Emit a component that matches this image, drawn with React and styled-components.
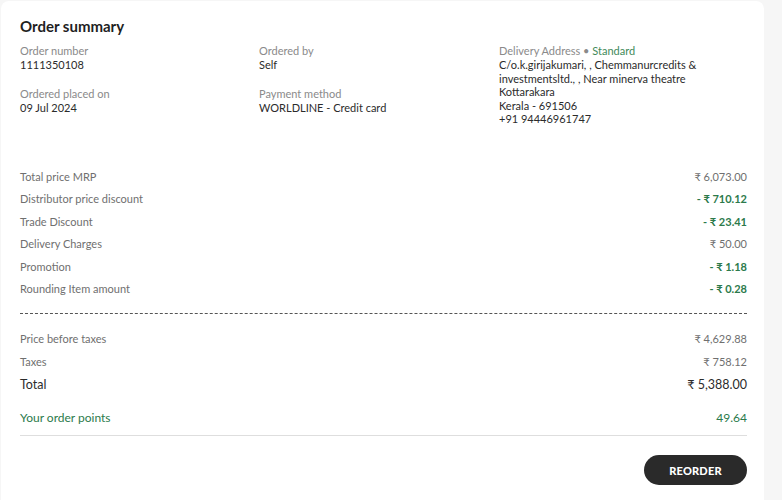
import React from "react";
import styled, { createGlobalStyle } from "styled-components";

const Global = createGlobalStyle`
  html, body { margin: 0; padding: 0; background: #f6f6f6; }
  body { font-family: Lato, "Noto Sans", sans-serif; color: #2b2b2b; }
  * { box-sizing: border-box; }
`;

const Page = styled.div`
  padding: 1px 0 0 1px;
  width: 782px;
  height: 500px;
  overflow: hidden;
`;

const Card = styled.section`
  width: 763px;
  min-height: 520px;
  background: #fff;
  border-radius: 8px;
  padding: 16px 17px 0 19px;
  display: flex;
  flex-direction: column;
`;

const Title = styled.h2`
  margin: 0;
  font-size: 15px;
  line-height: 18px;
  font-weight: 700;
  color: #1f1f1f;
`;

const InfoGrid = styled.div`
  display: grid;
  grid-template-columns: 239px 240px 1fr;
  margin-top: 9px;
`;

const Column = styled.div`
  display: flex;
  flex-direction: column;
  gap: 15px;
`;

const Field = styled.div`
  display: flex;
  flex-direction: column;
  font-size: 11px;
  line-height: 14px;
`;

const Label = styled.span`
  color: #8a8a8a;
`;

const Value = styled.span`
  color: #2b2b2b;
  line-height: ${(p) => (p.$dense ? "13.5px" : "14px")};
`;

const Accent = styled.span`
  color: #3f8a5a;
`;

const Prices = styled.div`
  display: flex;
  flex-direction: column;
  gap: 8.6px;
  margin-top: 44px;
`;

const Row = styled.div`
  display: flex;
  justify-content: space-between;
  align-items: center;
  font-size: ${(p) => p.$size || 11}px;
  line-height: 14px;
  color: ${(p) => (p.$tone === "dark" ? "#2b2b2b" : p.$tone === "green" ? "#2c7a4b" : "#6f6f6f")};
`;

const Amount = styled.span`
  font-weight: ${(p) => (p.$bold ? 700 : 400)};
  color: ${(p) => (p.$bold ? "#2c7a4b" : "inherit")};
`;

const Dashed = styled.hr`
  border: 0;
  border-top: 1px dashed #555;
  margin: 17px 0 18px;
  height: 0;
`;

const Totals = styled.div`
  display: flex;
  flex-direction: column;
  gap: 9px;
`;

const Points = styled(Row)`
  margin-top: 19px;
`;

const Solid = styled.hr`
  border: 0;
  border-top: 1px solid #dedede;
  margin: 10px 0 0;
  height: 0;
`;

const Actions = styled.div`
  display: flex;
  justify-content: flex-end;
  margin-top: 19px;
`;

const Button = styled.button`
  height: 30px;
  width: 103px;
  border: 0;
  border-radius: 15px;
  background: #2a2a2a;
  color: #fff;
  font-family: Lato, "Noto Sans", sans-serif;
  font-weight: 900;
  font-size: 11px;
  letter-spacing: 0.2px;
  cursor: pointer;
`;

const priceRows = [
  ["Total price MRP", "₹ 6,073.00", false],
  ["Distributor price discount", "- ₹ 710.12", true],
  ["Trade Discount", "- ₹ 23.41", true],
  ["Delivery Charges", "₹ 50.00", false],
  ["Promotion", "- ₹ 1.18", true],
  ["Rounding Item amount", "- ₹ 0.28", true],
];

export default function App() {
  return (
    <>
      <Global />
      <Page>
        <Card>
          <Title>Order summary</Title>
          <InfoGrid>
            <Column>
              <Field>
                <Label>Order number</Label>
                <Value>1111350108</Value>
              </Field>
              <Field>
                <Label>Ordered placed on</Label>
                <Value>09 Jul 2024</Value>
              </Field>
            </Column>
            <Column>
              <Field>
                <Label>Ordered by</Label>
                <Value>Self</Value>
              </Field>
              <Field>
                <Label>Payment method</Label>
                <Value>WORLDLINE - Credit card</Value>
              </Field>
            </Column>
            <Column>
              <Field>
                <Label>
                  Delivery Address • <Accent>Standard</Accent>
                </Label>
                <Value $dense>
                  C/o.k.girijakumari, , Chemmanurcredits &amp;
                  <br />
                  investmentsltd., , Near minerva theatre
                  <br />
                  Kottarakara
                  <br />
                  Kerala - 691506
                  <br />
                  +91 94446961747
                </Value>
              </Field>
            </Column>
          </InfoGrid>

          <Prices>
            {priceRows.map(([label, amount, bold]) => (
              <Row key={label}>
                <span>{label}</span>
                <Amount $bold={bold}>{amount}</Amount>
              </Row>
            ))}
          </Prices>

          <Dashed />

          <Totals>
            <Row>
              <span>Price before taxes</span>
              <Amount>₹ 4,629.88</Amount>
            </Row>
            <Row>
              <span>Taxes</span>
              <Amount>₹ 758.12</Amount>
            </Row>
            <Row $tone="dark" $size={12.5}>
              <span>Total</span>
              <Amount>₹ 5,388.00</Amount>
            </Row>
          </Totals>

          <Points $tone="green" $size={12}>
            <span>Your order points</span>
            <span>49.64</span>
          </Points>
          <Solid />

          <Actions>
            <Button>REORDER</Button>
          </Actions>
        </Card>
      </Page>
    </>
  );
}
